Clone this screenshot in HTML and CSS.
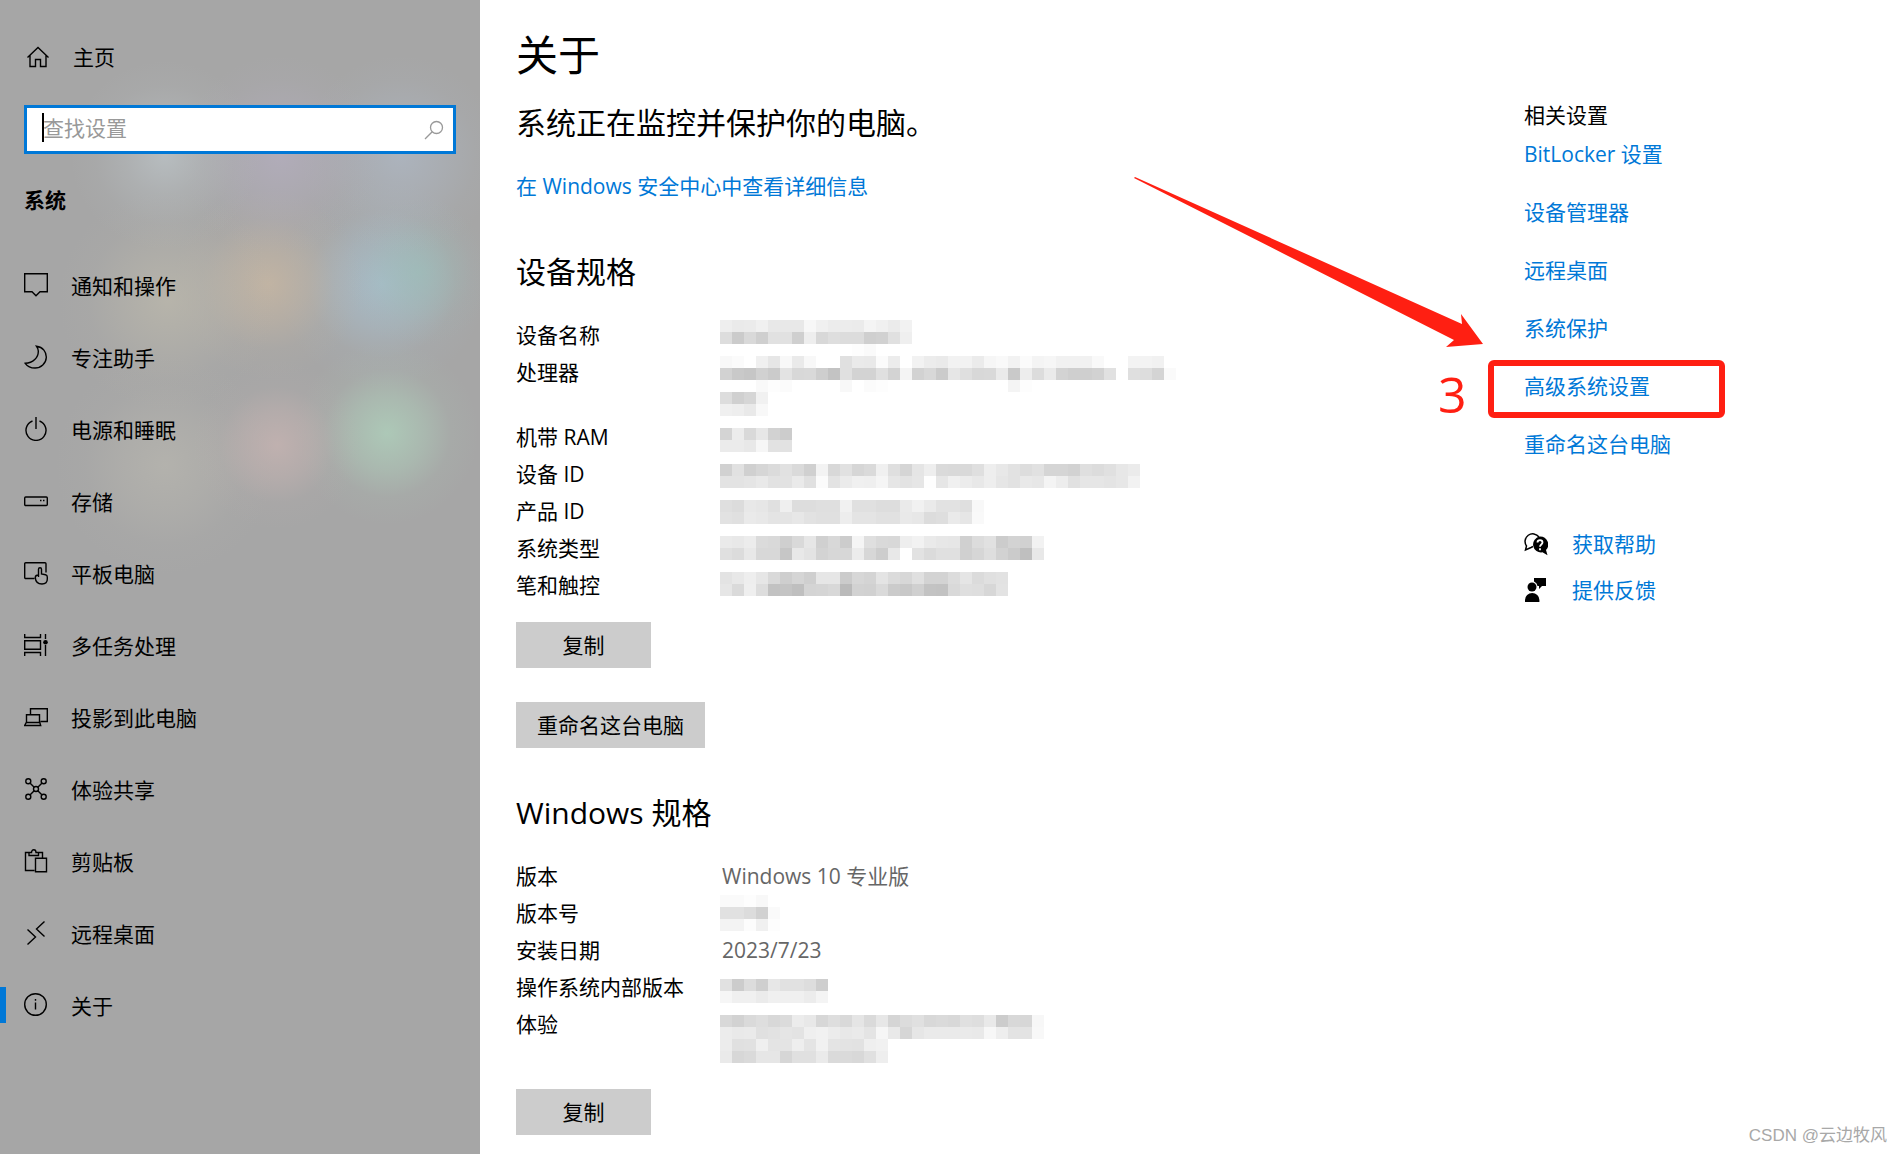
FILE: index.html
```html
<!DOCTYPE html>
<html lang="zh-CN">
<head>
<meta charset="utf-8">
<meta name="viewport" content="width=device-width, initial-scale=1">
<title>设置 - 关于</title>
<link rel="stylesheet" href="styles.css">
</head>
<body>
<div class="settings">
  <nav class="sidebar" aria-label="系统">
    <a class="home" href="#">
      <svg class="icon" viewBox="0 0 24 24"><path d="M1.5 12.5 12 2.5l10.500 10M4 10.500V21.500h5.500V14.500h5V21.500H20V10.500"/></svg>
      <span>主页</span>
    </a>
    <div class="search">
      <input class="search-input" type="text" aria-label="查找设置" placeholder="查找设置">
      <span class="caret"></span>
      <svg class="search-icon" viewBox="0 0 20 20"><circle cx="12.500" cy="7.500" r="6"/><path d="M8.200 11.800 1 19"/></svg>
    </div>
    <h2 class="group">系统</h2>
    <ul class="menu">
      <li><a class="item" href="#"><svg class="icon" viewBox="0 0 24 24"><path d="M.7.7h22.600v18h-7.300l-4 4-4-4H.7z"/></svg><span>通知和操作</span></a></li>
      <li><a class="item" href="#"><svg class="icon" viewBox="0 0 24 24"><path d="M12.500 1.200C19 2 22.500 7 22.300 12.500 22 18.500 17 23 11 23 7 23 3.500 21.500 1.200 18.300 9 18 14.500 12.500 14.300 6 14.200 4 13.500 2.500 12.500 1.200z"/></svg><span>专注助手</span></a></li>
      <li><a class="item" href="#"><svg class="icon" viewBox="0 0 24 24"><path d="M12 0v12M8.500 4a10 10 0 1 0 7 0"/></svg><span>电源和睡眠</span></a></li>
      <li><a class="item" href="#"><svg class="icon" viewBox="0 0 24 24"><rect x=".7" y="8" width="22.600" height="8.500" rx="1"/><path d="M16 11.500h1.500M19 11.500h1.500"/></svg><span>存储</span></a></li>
      <li><a class="item" href="#"><svg class="icon" viewBox="0 0 24 24"><path d="M10.500 17.500H1.700a1 1 0 0 1-1-1V2.700a1 1 0 0 1 1-1H21a1 1 0 0 1 1 1V11.500M14.500 16V8.200a1.500 1.500 0 0 1 3 0V13l4 .8q1.800.4 1.800 2.200v2c0 3-2 5-5.300 5-4 0-6.500-2.500-6.700-6.500 0-1.500 1-2.500 3.200-2.500"/></svg><span>平板电脑</span></a></li>
      <li><a class="item" href="#"><svg class="icon" viewBox="0 0 24 24"><path d="M.7 1v3.500H16.500V1M.7 23v-3.500H16.500V23M0 7.700h16.500v8.600H.7V7.700M21.500 1v5M21.500 12v11"/><circle class="solid" cx="21.500" cy="9.200" r="2.300"/></svg><span>多任务处理</span></a></li>
      <li><a class="item" href="#"><svg class="icon" viewBox="0 0 24 24"><path d="M6.500 9V3.700h16.800v12.800H16.500M2.500 18V9.700h13V18M2.300 17.500h13.500l.9 3H.7z"/></svg><span>投影到此电脑</span></a></li>
      <li><a class="item" href="#"><svg class="icon" viewBox="0 0 24 24"><circle cx="12" cy="12" r="2.500"/><circle cx="4.300" cy="4.300" r="2.500"/><circle cx="19.700" cy="4.300" r="2.500"/><circle cx="4.300" cy="19.700" r="2.500"/><circle cx="19.700" cy="19.700" r="2.500"/><path d="m6.200 6.200 4 4M17.800 6.200l-4 4M6.200 17.800l4-4M17.800 17.800l-4-4"/></svg><span>体验共享</span></a></li>
      <li><a class="item" href="#"><svg class="icon" viewBox="0 0 24 24"><path d="M10.500 21.500h-9v-18H5M14.500 3.500h4V9M5 6.500V3.500h2.500C7.500-.2 12-.2 12 3.500h2.500v3zM11.500 9.200h11v13.500h-11z"/></svg><span>剪贴板</span></a></li>
      <li><a class="item" href="#"><svg class="icon" viewBox="0 0 24 24"><path d="m3.500 8.500 8 7.500-8 7.500M20.500.5l-8 7.500 8 7.500"/></svg><span>远程桌面</span></a></li>
      <li><a class="item current" href="#" aria-current="page"><svg class="icon" viewBox="0 0 24 24"><circle cx="11.500" cy="11.500" r="10.800"/><path d="M11.500 9.500v7M11.500 6v1.700"/></svg><span>关于</span></a></li>
    </ul>
  </nav>

  <main class="content">
    <h1 class="title">关于</h1>
    <p class="status">系统正在监控并保护你的电脑。</p>
    <a class="link" href="#">在 Windows 安全中心中查看详细信息</a>

    <section class="section device">
      <h2 class="heading">设备规格</h2>
      <div class="specs">
        <table>
          <tr><th scope="row">设备名称</th><td></td></tr>
          <tr class="tall"><th scope="row">处理器</th><td></td></tr>
          <tr><th scope="row">机带 RAM</th><td></td></tr>
          <tr><th scope="row">设备 ID</th><td></td></tr>
          <tr><th scope="row">产品 ID</th><td></td></tr>
          <tr><th scope="row">系统类型</th><td></td></tr>
          <tr><th scope="row">笔和触控</th><td></td></tr>
        </table>
        <svg class="mosaic" data-mosaic="device" aria-hidden="true"></svg>
      </div>
      <div class="actions">
        <button class="button" type="button">复制</button>
        <button class="button" type="button">重命名这台电脑</button>
      </div>
    </section>

    <section class="section windows">
      <h2 class="heading">Windows 规格</h2>
      <div class="specs">
        <table>
          <tr><th scope="row">版本</th><td>Windows 10 专业版</td></tr>
          <tr><th scope="row">版本号</th><td></td></tr>
          <tr><th scope="row">安装日期</th><td>2023/7/23</td></tr>
          <tr><th scope="row">操作系统内部版本</th><td></td></tr>
          <tr class="tall"><th scope="row">体验</th><td></td></tr>
        </table>
        <svg class="mosaic lower" data-mosaic="windows" aria-hidden="true"></svg>
      </div>
      <div class="actions">
        <button class="button" type="button">复制</button>
      </div>
    </section>
  </main>

  <aside class="related">
    <h2 class="related-title">相关设置</h2>
    <ul class="related-list">
      <li><a class="link" href="#">BitLocker 设置</a></li>
      <li><a class="link" href="#">设备管理器</a></li>
      <li><a class="link" href="#">远程桌面</a></li>
      <li><a class="link" href="#">系统保护</a></li>
      <li class="marked">
        <a class="link" href="#">高级系统设置</a>
        <span class="frame"></span>
        <span class="step">3</span>
        <svg class="arrow" viewBox="0 0 350 172" aria-hidden="true"><path d="M1 0 328 147 327 137 349 167 312 170 320 163 0 1z"/></svg>
      </li>
      <li><a class="link" href="#">重命名这台电脑</a></li>
    </ul>
    <ul class="support">
      <li>
        <svg class="support-icon" viewBox="0 0 24 24"><path class="outline" d="M9 14.500 7 15.500 1.500 18 2.500 14A7.300 7.300 0 1 1 15 5"/><path d="M16 4.500a8 8 0 1 0 2.500 15.800l5 3-1.500-5.300A8 8 0 0 0 16 4.500z"/><path class="mark" d="M13.500 10.500c0-3.200 5-3.200 5 0 0 2-2.500 2-2.500 4.300M16 16.300v1.900"/></svg>
        <a class="link" href="#">获取帮助</a>
      </li>
      <li>
        <svg class="support-icon" viewBox="0 0 24 24"><path d="M10 0h12v8h-4l-3 3V8h-1.500A6 6 0 0 0 10 3.500z"/><circle cx="8" cy="9" r="4.500"/><path d="M1 24v-2a7.200 7 0 0 1 14.400 0v2z"/></svg>
        <a class="link" href="#">提供反馈</a>
      </li>
    </ul>
  </aside>
  <div class="watermark">CSDN @云边牧风</div>
</div>
<script src="mosaic.js"></script>
</body>
</html>
```
FILE: styles.css
```css
* {
  box-sizing: border-box;
}

body {
  margin: 0;
  background: #fff;
  color: #000;
  font: 21px/28px "Open Sans", "Noto Sans CJK SC", sans-serif;
}

ul {
  margin: 0;
  padding: 0;
  list-style: none;
}

h1,
h2,
p {
  margin: 0;
  font-weight: 400;
}

a {
  text-decoration: none;
}

.settings {
  position: relative;
  display: flex;
  min-height: 100vh;
}

/* Sidebar */

.sidebar {
  flex: 0 0 480px;
  padding-top: 43px;
  background:
    radial-gradient(circle at 165px 155px, rgba(190, 198, 202, .7), rgba(190, 198, 202, .3) 40px, rgba(190, 198, 202, .08) 70px, transparent 95px),
    radial-gradient(circle at 280px 155px, rgba(184, 176, 198, .6), rgba(184, 176, 198, .3) 44px, rgba(184, 176, 198, .08) 76px, transparent 100px),
    radial-gradient(circle at 400px 155px, rgba(176, 188, 204, .6), rgba(176, 188, 204, .3) 44px, rgba(176, 188, 204, .08) 76px, transparent 100px),
    radial-gradient(circle at 168px 300px, rgba(190, 186, 172, .7), rgba(190, 186, 172, .35) 46px, rgba(190, 186, 172, .08) 80px, transparent 110px),
    radial-gradient(circle at 268px 284px, rgba(202, 184, 162, .75), rgba(202, 184, 162, .4) 38px, rgba(202, 184, 162, .1) 66px, transparent 95px),
    radial-gradient(circle at 418px 272px, rgba(152, 194, 184, .5), rgba(152, 194, 184, .25) 32px, rgba(152, 194, 184, .06) 54px, transparent 75px),
    radial-gradient(circle at 382px 284px, rgba(168, 190, 204, .85), rgba(168, 190, 204, .45) 44px, rgba(168, 190, 204, .1) 74px, transparent 105px),
    radial-gradient(circle at 277px 445px, rgba(200, 180, 178, .75), rgba(200, 180, 178, .4) 34px, rgba(200, 180, 178, .08) 58px, transparent 85px),
    radial-gradient(circle at 387px 433px, rgba(174, 206, 186, .85), rgba(174, 206, 186, .45) 38px, rgba(174, 206, 186, .1) 64px, transparent 92px),
    radial-gradient(circle at 165px 465px, rgba(186, 184, 176, .65), rgba(186, 184, 176, .35) 46px, rgba(186, 184, 176, .08) 80px, transparent 110px),
    #a6a6a6;
}

.home,
.item {
  display: flex;
  align-items: center;
  color: #000;
}

.home {
  gap: 23px;
  padding-left: 26px;
}

.icon {
  flex: none;
  width: 24px;
  height: 24px;
  fill: none;
  stroke: #000;
  stroke-width: 1.4;
}

.icon .solid {
  fill: #000;
  stroke: none;
}

.search {
  position: relative;
  margin: 34px 24px 0;
}

.search-input {
  display: block;
  width: 100%;
  height: 49px;
  padding: 0 48px 3px 16px;
  border: 3px solid #0078d7;
  border-radius: 0;
  background: #fff;
  font: inherit;
  outline: none;
}

.search-input::placeholder {
  color: #999;
  opacity: 1;
}

.caret {
  position: absolute;
  top: 8px;
  left: 18px;
  width: 2px;
  height: 29px;
  background: #000;
}

.search-icon {
  position: absolute;
  top: 15px;
  right: 12px;
  width: 20px;
  height: 20px;
  fill: none;
  stroke: #999;
  stroke-width: 1.3;
}

.group {
  margin: 32px 24px 36px;
  font-size: 21px;
  font-weight: 700;
}

.item {
  position: relative;
  gap: 23px;
  height: 72px;
  padding-left: 24px;
}

.item .icon {
  margin-bottom: 2px;
}

.current::before {
  content: "";
  position: absolute;
  top: 17px;
  left: 0;
  width: 6px;
  height: 36px;
  background: #0078d7;
}

/* Main column */

.content {
  flex: 1;
  padding: 27px 36px 12px;
}

.title {
  font-size: 42px;
  line-height: 56px;
}

.status {
  margin: 20px 0 29px;
  font-size: 30px;
  line-height: 40px;
}

.link {
  color: #0078d7;
}

.device {
  margin-top: 52px;
}

.windows {
  margin-top: 45px;
}

.heading {
  margin-bottom: 29px;
  font-size: 30px;
  line-height: 40px;
}

.specs {
  position: relative;
}

.specs table {
  border-collapse: collapse;
}

.specs tr {
  height: 37px;
}

.specs .tall {
  height: 65px;
}

.specs th,
.specs td {
  padding: 0 0 9px;
  font-weight: 400;
  text-align: left;
  vertical-align: top;
}

.specs th {
  width: 206px;
}

.specs td {
  color: #666;
}

.mosaic {
  position: absolute;
  top: -1px;
  left: 204px;
}

.mosaic.lower {
  top: 33px;
}

.actions {
  display: flex;
  flex-direction: column;
  align-items: flex-start;
  gap: 34px;
  margin-top: 14px;
}

.button {
  min-width: 135px;
  height: 46px;
  padding: 0 21px;
  border: 0;
  background: #ccc;
  color: #000;
  font: inherit;
}

/* Related settings */

.related {
  flex: 0 0 378px;
  padding-top: 101px;
}

.related-title {
  font-size: 21px;
}

.related-list {
  display: grid;
  gap: 30px;
  margin-top: 11px;
}

.marked {
  position: relative;
}

.frame {
  position: absolute;
  top: -12px;
  left: -36px;
  width: 237px;
  height: 58px;
  border: 6px solid #ff1f12;
  border-radius: 6px;
  pointer-events: none;
}

.step {
  position: absolute;
  top: -12px;
  left: -86px;
  color: #ff1f12;
  font-size: 50px;
  line-height: 68px;
}

.arrow {
  position: absolute;
  top: -195px;
  left: -390px;
  width: 350px;
  height: 172px;
  fill: #ff1f12;
}

.support {
  display: grid;
  gap: 18px;
  margin-top: 72px;
}

.support li {
  display: flex;
  align-items: center;
  gap: 24px;
}

.support-icon {
  flex: none;
  width: 24px;
  height: 24px;
}

.support-icon .outline {
  fill: none;
  stroke: #000;
  stroke-width: 1.5;
}

.support-icon .mark {
  fill: none;
  stroke: #fff;
  stroke-width: 1.8;
}

.watermark {
  position: absolute;
  right: 15px;
  bottom: 6px;
  color: #a8a8a8;
  font: 17px/24px "Liberation Sans", "Noto Sans CJK SC", sans-serif;
}
```
FILE: mosaic.js
```js
// Grey levels of the blocks that cover private values.
// Each entry: row number, first column, then one hex pair per block.
const CELL = 12;
const MOSAICS = {
  device: [
    [0, 0, "eeeaebf0e8e8e8f7f0ececebf4f0ebf2"],
    [1, 0, "ddcbd9cfe1e1cfeed8dedcdccfd1e0ef"],
    [2, 11, "fdfa"],
    [3, 0, "f8fbfff0e6f8eaf8ffffe0eae9fbecfff2eceaf2f2ebf6f9f2fbf4f6f1f1f1f9fffff3f3f1"],
    [4, 0, "d2c9c6d1cbe3d8d9cec3e0d3d3e0d3f4d2d8cbe6dfd8d9eac9eddcead3cfcfd2e1ffdfddd4fa"],
    [5, 3, "f9fdfbfffffffff8fffbfd"],
    [5, 24, "f4fd"],
    [6, 0, "ddd0d6f1"],
    [7, 0, "f0eee9f8"],
    [9, 0, "d4ecd9e7d2cc"],
    [10, 0, "ebebe8f6e2e2"],
    [12, 0, "d1e1d0d6dbe1dad0f3d8e1d6daf0dfd5e5eedad9d9dfeee8e2dde1d5d5d2dfdce0e7eb"],
    [13, 0, "e3e3e5e9e2e2eae0fbe3ebf0eff5e6e3e6fee6f0ece8eee6e2e9e7f4ede1e6e6e4e7f2"],
    [15, 0, "dfdce8e6e0efdddddfdff1e0e0ddddeaf1eae2e2dff8"],
    [16, 0, "e2e0eae8e4e4e7e2e0e0ede4e4e1e1e9e7dcdeeae6f9"],
    [18, 0, "eae8ecdbd9cfd9e6d0d8ccf5dfd9d8eef2eae7e6d0dce1ccd3d1f2"],
    [19, 0, "e0dce8d8d8c6e8e3d3d7d7ecd7cde8ffe2dbe0e0d0d6ded2cbbfe8"],
    [21, 0, "e3e8eee6d9ced5cfe6e6cbd7d4e4dbd7e0d3d3dce5dbe0e2"],
    [22, 0, "e6daefddc2c4bfd4d5d8bad2d1dacbc8d0c3c2d9dfded7e3"]
  ],
  windows: [
    [0, 0, "fafafdf8"],
    [1, 0, "e1e1dcd1fa"],
    [2, 0, "f3f3fcf0fd"],
    [7, 0, "e1ccdccfe7e1e1ddce"],
    [8, 0, "f6f0f0ebf0f0f0ecf4"],
    [10, 0, "d8d2daded8dbece8d7ded9e5dae7d5dce0d8dad8e0dee9ccd8d7f7"],
    [11, 0, "ece9eae0e2e5e3eff1ece8eae4f6e9d6e6eaeaeaeae9f7eee3e3f8"],
    [12, 0, "ece0e1efe4e4eee4f1e4e3e2eff1"],
    [13, 0, "ead7dae6e6d6e0e0eadadad8e0ee"]
  ]
};

document.querySelectorAll("[data-mosaic]").forEach((svg) => {
  const rows = MOSAICS[svg.dataset.mosaic];
  let columns = 0;
  for (const [row, start, levels] of rows) {
    levels.match(/../g).forEach((level, index) => {
      const rect = document.createElementNS("http://www.w3.org/2000/svg", "rect");
      rect.setAttribute("x", (start + index) * CELL);
      rect.setAttribute("y", row * CELL);
      rect.setAttribute("width", CELL);
      rect.setAttribute("height", CELL);
      rect.setAttribute("fill", "#" + level.repeat(3));
      svg.append(rect);
    });
    columns = Math.max(columns, start + levels.length / 2);
  }
  svg.setAttribute("width", columns * CELL);
  svg.setAttribute("height", (rows[rows.length - 1][0] + 1) * CELL);
});
```
